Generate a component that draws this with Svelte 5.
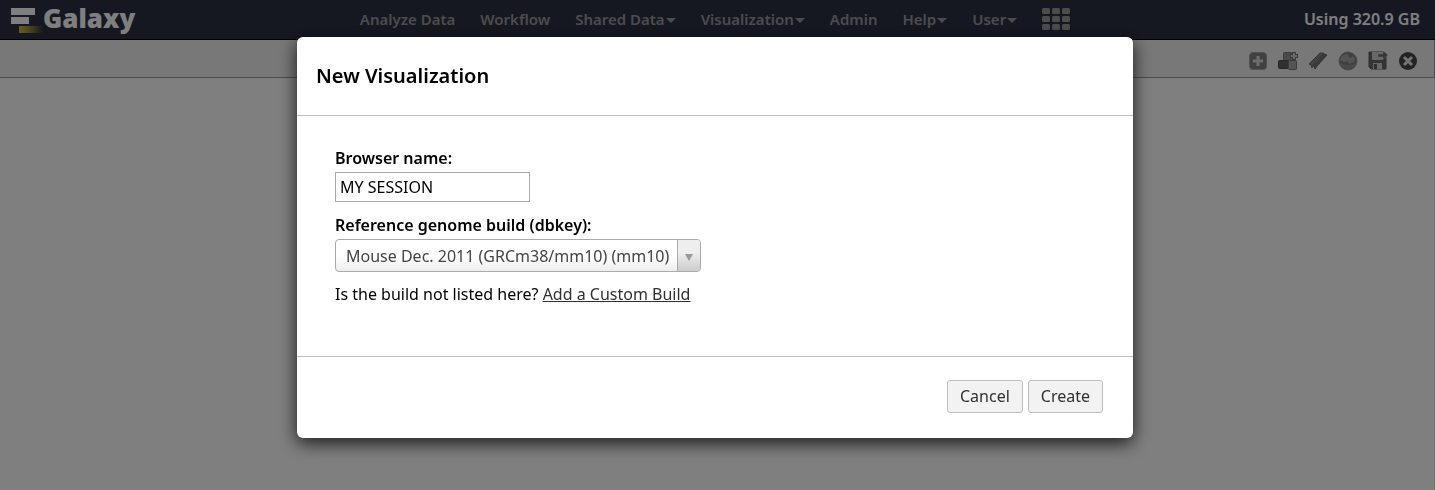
<script>
  const menu = [
    { label: 'Analyze Data' },
    { label: 'Workflow' },
    { label: 'Shared Data', drop: true },
    { label: 'Visualization', drop: true },
    { label: 'Admin' },
    { label: 'Help', drop: true },
    { label: 'User', drop: true }
  ];
  const cells = [0, 1, 2].flatMap((row) => [0, 1, 2].map((col) => ({ x: col * 10, y: row * 8 })));
  let name = $state('MY SESSION');
  let build = $state('mm10');
</script>

<div class="page">
  <header class="masthead">
    <a class="brand" href="#home">
      <svg width="33" height="30" viewBox="0 0 33 30" aria-hidden="true">
        <defs>
          <linearGradient id="beam">
            <stop offset="0" stop-color="#cdb92e" />
            <stop offset="0.35" stop-color="#a8982e" />
            <stop offset="1" stop-color="#2c3143" />
          </linearGradient>
        </defs>
        <rect x="1" y="3" width="24" height="7" fill="#fff" />
        <rect x="1" y="12" width="18" height="7" fill="#fff" />
        <rect x="9" y="21" width="24" height="7" fill="url(#beam)" />
      </svg>
      <span>Galaxy</span>
    </a>
    <nav>
      {#each menu as item}
        <a href="#menu">{item.label}{#if item.drop}<i class="caret"></i>{/if}</a>
      {/each}
      <a href="#scratchbook" aria-label="Scratchbook">
        <svg width="28" height="22" viewBox="0 0 28 22">
          {#each cells as c}
            <rect x={c.x} y={c.y} width="8" height="6" rx="1.5" fill="#999" />
          {/each}
        </svg>
      </a>
    </nav>
    <span class="quota">Using 320.9 GB</span>
  </header>

  <div class="toolbar">
    <button aria-label="Add tracks">
      <svg width="18" height="18" viewBox="0 0 18 18">
        <rect x="0.5" y="0.5" width="17" height="17" rx="3.5" fill="#838383" stroke="#a2a2a2" />
        <path d="M9 4v10M4 9h10" stroke="#dcdcdc" stroke-width="3" />
      </svg>
    </button>
    <button aria-label="Add group">
      <svg width="20" height="18" viewBox="0 0 20 18">
        <rect x="5.500" y="0.500" width="9" height="8" rx="1" fill="#959595" stroke="#7c7c7c" />
        <rect x="0.500" y="8.500" width="10" height="8" rx="1" fill="#606060" stroke="#505050" />
        <rect x="10.500" y="8.500" width="8" height="9" rx="1" fill="#aaa" stroke="#757575" />
        <path d="M16 0v8M12 4h8" stroke="#777" stroke-width="4" />
        <path d="M16 1v6M13 4h6" stroke="#d0d0d0" stroke-width="2" />
      </svg>
    </button>
    <button aria-label="Bookmarks">
      <svg width="20" height="18" viewBox="0 0 20 18">
        <path d="M1 12 12 1h4L5 13l-1 3-1-3z" fill="#858585" stroke="#707070" />
        <path d="M5 14 16 2l3 1L9 14l-2 3-1-3z" fill="#747474" stroke="#686868" />
      </svg>
    </button>
    <button aria-label="Circster">
      <svg width="20" height="20" viewBox="0 0 20 20">
        <circle cx="10" cy="10" r="9" fill="#808080" stroke="#999" />
        <path d="M2 9 3 6l4-3 4 1-1 2 3 1 2-2 2 3-1 4-2-1-2 2-3-3-3 1z" fill="#a8a8a8" />
        <path d="M2 12q8 4 16 0-2 6-8 6t-8-6z" fill="#929292" />
      </svg>
    </button>
    <button aria-label="Save">
      <svg width="20" height="19" viewBox="0 0 20 19">
        <path d="M1 1h15l2 2v15H3l-2-2z" fill="#686868" stroke="#606060" />
        <path d="M4 1h11v8H4z" fill="#d0d0d0" />
        <path d="M5 12h9v6H5z" fill="#d0d0d0" />
        <path d="M6 13h3v5H6z" fill="#606060" />
        <path d="M10 3h5V0l5 4-5 4V6h-5z" fill="#686868" stroke="#d0d0d0" stroke-width="0.500" />
      </svg>
    </button>
    <button aria-label="Close">
      <svg width="18" height="18" viewBox="0 0 18 18">
        <circle cx="9" cy="9" r="9" fill="#484848" />
        <path d="m5 5 8 8M13 5l-8 8" stroke="#eaeaea" stroke-width="3" />
      </svg>
    </button>
  </div>
  <main></main>
</div>

<div class="overlay">
  <div class="dialog" role="dialog" aria-modal="true" aria-labelledby="dialog-title">
    <h1 id="dialog-title">New Visualization</h1>
    <form id="new-vis">
      <label for="browser-name">Browser name:</label>
      <input id="browser-name" type="text" bind:value={name} />
      <label for="dbkey">Reference genome build (dbkey):</label>
      <div class="select">
        <select id="dbkey" bind:value={build}>
          <option value="mm10">Mouse Dec. 2011 (GRCm38/mm10) (mm10)</option>
        </select>
        <span class="arrow" aria-hidden="true"></span>
      </div>
      <p>Is the build not listed here? <a href="#custom">Add a Custom Build</a></p>
    </form>
    <footer>
      <button type="button">Cancel</button>
      <button type="button">Create</button>
    </footer>
  </div>
</div>

<style>
  :global(body) {
    margin: 0;
    font-family: 'Noto Sans', sans-serif;
    font-size: 16px;
    line-height: 20px;
    color: #000;
  }
  * {
    box-sizing: border-box;
  }
  .page {
    display: flex;
    flex-direction: column;
    min-height: 100vh;
    background: #fff;
  }
  .masthead {
    display: grid;
    grid-template-columns: 1fr auto 1fr;
    align-items: center;
    height: 40px;
    padding: 0 15px 3px 10px;
    background: #2c3143;
    border-bottom: 1px solid #000;
  }
  .masthead a {
    text-decoration: none;
  }
  .brand {
    display: flex;
    align-items: center;
    color: #fff;
    font-family: 'Open Sans', sans-serif;
    font-size: 26px;
    font-weight: 800;
    line-height: 36px;
  }
  .brand svg {
    margin-top: 2px;
  }
  .brand span {
    margin-bottom: 1px;
  }
  nav {
    display: flex;
    align-items: center;
    gap: 25px;
  }
  nav a {
    display: flex;
    align-items: center;
    color: #999;
    font-size: 15px;
    font-weight: 600;
  }
  .caret {
    margin-top: 4px;
    margin-left: 1px;
    border: 5px solid transparent;
    border-top-color: #999;
    border-bottom: 0;
  }
  .quota {
    justify-self: end;
    color: #fff;
    font-weight: 600;
  }
  .toolbar {
    display: flex;
    justify-content: flex-end;
    align-items: center;
    gap: 10px;
    height: 38px;
    padding: 4px 16px 0 0;
    background: #f0f0f0;
    border-bottom: 1px solid #999;
    border-right: 1px solid #999;
  }
  .toolbar button {
    display: grid;
    place-items: center;
    width: 20px;
    height: 20px;
    padding: 0;
    border: 0;
    background: none;
  }
  main {
    flex: 1;
    border-right: 1px solid #ddd;
  }
  .overlay {
    position: fixed;
    inset: 0;
    display: flex;
    justify-content: center;
    align-items: flex-start;
    padding: 37px 5px 0 0;
    background: rgba(0, 0, 0, 0.5);
  }
  .dialog {
    width: 100%;
    max-width: 836px;
    background: #fff;
    border-radius: 6px;
    box-shadow: 0 5px 18px rgba(0, 0, 0, 0.8);
  }
  h1 {
    margin: 0;
    padding: 24px 19px;
    border-bottom: 1px solid #bfbfbf;
    font-size: 20px;
    font-weight: 600;
    line-height: 30px;
  }
  form {
    display: flex;
    flex-direction: column;
    align-items: flex-start;
    padding: 32px 38px 52px;
  }
  label {
    margin-bottom: 4px;
    font-weight: 600;
  }
  input {
    width: 195px;
    height: 30px;
    margin-bottom: 13px;
    padding: 0 4px;
    border: 1px solid #aaa;
    color: #000;
    font: inherit;
  }
  .select {
    display: grid;
    grid-template-columns: 1fr 23px;
    width: 366px;
    height: 33px;
    margin-bottom: 12px;
    overflow: hidden;
    border: 1px solid #aaa;
    border-radius: 4px;
    background: linear-gradient(#fff 50%, #eee);
  }
  select {
    grid-area: 1 / 1 / 2 / 3;
    padding: 0 10px;
    border: 0;
    appearance: none;
    background: none;
    color: #444;
    font: inherit;
  }
  .arrow {
    grid-area: 1 / 2;
    display: grid;
    place-items: center;
    padding-top: 3px;
    border-left: 1px solid #aaa;
    background: linear-gradient(#eee 40%, #ccc);
    pointer-events: none;
  }
  .arrow::before {
    content: '';
    border: 4px solid transparent;
    border-top: 7px solid #999;
    border-bottom: 0;
  }
  p {
    margin: 0;
  }
  p a {
    color: #303030;
  }
  footer {
    display: flex;
    justify-content: flex-end;
    gap: 5px;
    padding: 23px 30px 25px;
    border-top: 1px solid #bfbfbf;
  }
  footer button {
    height: 33px;
    padding: 0 12px 1px;
    border: 1px solid #bfbfbf;
    border-radius: 3px;
    background: #f2f2f2;
    color: #303030;
    font: inherit;
  }
</style>
